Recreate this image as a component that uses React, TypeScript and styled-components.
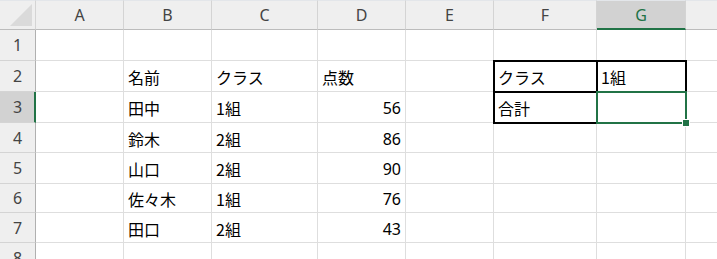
import styled, { createGlobalStyle, css } from "styled-components";

const GlobalStyle = createGlobalStyle`
  html, body {
    margin: 0;
    padding: 0;
    background: #ffffff;
    overflow: hidden;
  }
  body {
    font-family: "Noto Sans CJK JP", "Noto Sans", sans-serif;
  }
`;

// row header + A..H
const colWidths = [36, 88, 88, 106, 88, 88, 103, 89, 89];
const rowHeights = [30, 31, 31, 31, 30, 31, 29, 30, 30];
const columns = ["A", "B", "C", "D", "E", "F", "G", "H"];
// H's letter sits past the right edge of the window
const visibleLabels = ["A", "B", "C", "D", "E", "F", "G"];

type CellValue = { text: string; align?: "left" | "right" };

const data: Record<string, CellValue> = {
  B2: { text: "名前" },
  C2: { text: "クラス" },
  D2: { text: "点数" },
  B3: { text: "田中" },
  C3: { text: "1組" },
  D3: { text: "56", align: "right" },
  B4: { text: "鈴木" },
  C4: { text: "2組" },
  D4: { text: "86", align: "right" },
  B5: { text: "山口" },
  C5: { text: "2組" },
  D5: { text: "90", align: "right" },
  B6: { text: "佐々木" },
  C6: { text: "1組" },
  D6: { text: "76", align: "right" },
  B7: { text: "田口" },
  C7: { text: "2組" },
  D7: { text: "43", align: "right" },
  F2: { text: "クラス" },
  G2: { text: "1組" },
  F3: { text: "合計" },
};

const Sheet = styled.div`
  display: grid;
  grid-template-columns: ${colWidths.map((w) => `${w}px`).join(" ")};
  grid-template-rows: ${rowHeights.map((h) => `${h}px`).join(" ")};
  width: 717px;
  height: 259px;
  overflow: hidden;
`;

const Corner = styled.div`
  grid-column: 1;
  grid-row: 1;
  background: #efefef;
  border-right: 1px solid #d4d4d4;
  border-bottom: 1px solid #bcbcbc;
  border-top: 1px solid #e3e6ea;
  box-sizing: border-box;
  position: relative;
  &::after {
    content: "";
    position: absolute;
    right: 3px;
    bottom: 3px;
    width: 0;
    height: 0;
    border-left: 22px solid transparent;
    border-bottom: 22px solid #dadada;
  }
`;

const ColHeader = styled.div<{ $active?: boolean }>`
  grid-row: 1;
  display: flex;
  align-items: center;
  justify-content: center;
  box-sizing: border-box;
  background: ${(p) => (p.$active ? "#d2d2d2" : "#efefef")};
  border-right: 1px solid #d4d4d4;
  border-bottom: ${(p) => (p.$active ? "2px solid #217346" : "1px solid #bcbcbc")};
  border-top: 1px solid #e3e6ea;
  color: ${(p) => (p.$active ? "#217346" : "#444444")};
  font-family: "Noto Sans", "Liberation Sans", sans-serif;
  font-size: 16px;
  padding-top: ${(p) => (p.$active ? "1px" : "0")};
`;

const RowHeader = styled.div<{ $active?: boolean }>`
  grid-column: 1;
  display: flex;
  align-items: center;
  justify-content: center;
  box-sizing: border-box;
  background: ${(p) => (p.$active ? "#d2d2d2" : "#efefef")};
  border-bottom: 1px solid #d4d4d4;
  border-right: ${(p) => (p.$active ? "2px solid #217346" : "1px solid #b0b0b0")};
  color: #444444;
  font-family: "Noto Sans", "Liberation Sans", sans-serif;
  font-size: 16px;
  padding-left: ${(p) => (p.$active ? "1px" : "0")};
`;

const Cell = styled.div<{ $align?: "left" | "right" }>`
  display: flex;
  align-items: center;
  box-sizing: border-box;
  border-right: 1px solid #dedede;
  border-bottom: 1px solid #dedede;
  padding: 2px 4px 0 4px;
  font-size: 16px;
  color: #000000;
  white-space: nowrap;
  overflow: hidden;
  ${(p) =>
    p.$align === "right" &&
    css`
      justify-content: flex-end;
      font-family: "Noto Sans", "Liberation Sans", sans-serif;
      padding-right: 4px;
    `}
`;

const RangeBox = styled.div`
  grid-column: 7 / 9;
  grid-row: 3 / 5;
  margin: -1px;
  border: 2px solid #000000;
  display: grid;
  grid-template-columns: 102px 1fr;
  grid-template-rows: 30px 1fr;
  pointer-events: none;
  z-index: 1;
`;

const RangeLine = styled.div<{ $dir: "v" | "h" }>`
  ${(p) =>
    p.$dir === "v"
      ? css`
          grid-column: 1;
          grid-row: 1 / 3;
          border-right: 2px solid #000000;
          margin-right: -1px;
        `
      : css`
          grid-column: 1 / 3;
          grid-row: 1;
          border-bottom: 2px solid #000000;
          margin-bottom: -1px;
        `}
`;

const Selection = styled.div`
  grid-column: 8;
  grid-row: 4;
  margin: -1px;
  border: 2px solid #217346;
  position: relative;
  z-index: 2;
  pointer-events: none;
`;

const FillHandle = styled.span`
  position: absolute;
  right: -5px;
  bottom: -5px;
  width: 6px;
  height: 6px;
  background: #217346;
  border: 1px solid #ffffff;
`;

export default function App() {
  const rows = rowHeights.length - 1;
  return (
    <>
      <GlobalStyle />
      <Sheet>
        <Corner />
        {columns.map((c, i) => (
          <ColHeader key={c} $active={c === "G"} style={{ gridColumn: i + 2 }}>
            {visibleLabels.includes(c) ? c : null}
          </ColHeader>
        ))}
        {Array.from({ length: rows }, (_, r) => (
          <RowHeader key={`r${r}`} $active={r + 1 === 3} style={{ gridRow: r + 2 }}>
            {r + 1}
          </RowHeader>
        ))}
        {Array.from({ length: rows }, (_, r) =>
          columns.map((c, i) => {
            const v = data[`${c}${r + 1}`];
            return (
              <Cell
                key={`${c}${r}`}
                $align={v?.align}
                style={{ gridColumn: i + 2, gridRow: r + 2 }}
              >
                {v?.text}
              </Cell>
            );
          })
        )}
        <RangeBox>
          <RangeLine $dir="v" />
          <RangeLine $dir="h" />
        </RangeBox>
        <Selection>
          <FillHandle />
        </Selection>
      </Sheet>
    </>
  );
}
